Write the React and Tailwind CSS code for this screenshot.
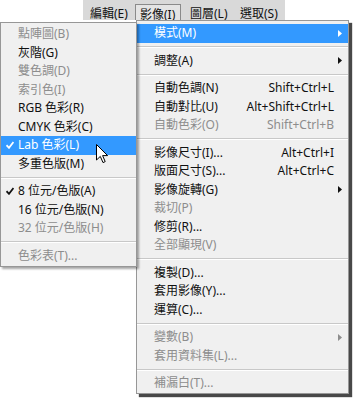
import React from 'react'

const leftItems = [
  { label: '點陣圖(B)', disabled: true },
  { label: '灰階(G)' },
  { label: '雙色調(D)', disabled: true },
  { label: '索引色(I)', disabled: true },
  { label: 'RGB 色彩(R)' },
  { label: 'CMYK 色彩(C)' },
  { label: 'Lab 色彩(L)', active: true, checked: true },
  { label: '多重色版(M)' },
  'sep',
  { label: '8 位元/色版(A)', checked: true },
  { label: '16 位元/色版(N)' },
  { label: '32 位元/色版(H)', disabled: true },
  'sep',
  { label: '色彩表(T)...', disabled: true },
]

const mainItems = [
  { label: '模式(M)', active: true, sub: true },
  'sep',
  { label: '調整(A)', sub: true },
  'sep',
  { label: '自動色調(N)', shortcut: 'Shift+Ctrl+L' },
  { label: '自動對比(U)', shortcut: 'Alt+Shift+Ctrl+L' },
  { label: '自動色彩(O)', shortcut: 'Shift+Ctrl+B', disabled: true },
  'sep',
  { label: '影像尺寸(I)...', shortcut: 'Alt+Ctrl+I' },
  { label: '版面尺寸(S)...', shortcut: 'Alt+Ctrl+C' },
  { label: '影像旋轉(G)', sub: true },
  { label: '裁切(P)', disabled: true },
  { label: '修剪(R)...' },
  { label: '全部顯現(V)', disabled: true },
  'sep',
  { label: '複製(D)...' },
  { label: '套用影像(Y)...' },
  { label: '運算(C)...' },
  'sep',
  { label: '變數(B)', sub: true, disabled: true },
  { label: '套用資料集(L)...', disabled: true },
  'sep',
  { label: '補漏白(T)...', disabled: true },
]

const Check = ({ color }) => (
  <svg width="8" height="8" viewBox="0 0 8 8">
    <path d="M0.5 4.2 L3 6.8 L7.5 1" fill="none" stroke={color} strokeWidth="1.8" />
  </svg>
)

const Arrow = ({ color }) => (
  <svg width="4" height="7" viewBox="0 0 4 7">
    <path d="M0 0 L4 3.5 L0 7 Z" fill={color} />
  </svg>
)

const Sep = () => (
  <div className="h-[9px] flex items-center">
    <div className="w-full border-t border-t-[#c8c8c8] border-b border-b-white" />
  </div>
)

function Item({ item }) {
  const { label, shortcut, disabled, active, sub, checked } = item
  const color = active ? 'text-white' : disabled ? 'text-[#8d8d8d]' : 'text-[#111]'
  const fill = active ? '#fff' : disabled ? '#8d8d8d' : '#111'
  return (
    <div className={`flex items-center h-[18.5px] ${active ? 'bg-[#3399ff]' : ''} ${color}`}>
      <div className="w-[17px] h-full flex items-center justify-center">
        {checked && <Check color={fill} />}
      </div>
      <span className="flex-1 whitespace-nowrap">{label}</span>
      {shortcut && <span className="whitespace-nowrap">{shortcut}</span>}
      <div className="w-[14px] h-full flex items-center pl-[4px]">
        {sub && <Arrow color={fill} />}
      </div>
    </div>
  )
}

export default function App() {
  return (
    <div className="relative w-[354px] h-[398px] bg-white overflow-hidden text-[12px] leading-[16px] font-['Noto_Sans','Noto_Sans_CJK_TC',sans-serif]">
      {/* menu bar */}
      <div className="ml-[83px] w-[202px] h-[20px] bg-[#d9d9d9] flex text-[#111]">
        <div className="w-[52px] pl-[7px] pt-[6px]">編輯(E)</div>
        <div className="w-[46px] mt-[4px] pl-[4px] pt-[2px] border border-b-0 border-[#8a8a8a] bg-[#e4e4e4]">影像(I)</div>
        <div className="w-[50px] pl-[9px] pt-[6px]">圖層(L)</div>
        <div className="w-[54px] pl-[9px] pt-[6px]">選取(S)</div>
      </div>

      <div className="flex items-start">
        {/* mode submenu */}
        <div className="relative z-10 mt-[2px] w-[137px] bg-[#f0f0f0] border border-[#979797] pt-[2px] pb-[1px] shadow-[2px_2px_2px_rgba(0,0,0,0.35)]">
          {leftItems.map((it, i) => (it === 'sep' ? <Sep key={i} /> : <Item key={i} item={it} />))}
        </div>

        {/* image menu */}
        <div className="-ml-[1px] w-[213px] bg-[#f0f0f0] border border-[#979797] pt-[3px] shadow-[3px_3px_1px_rgba(40,40,40,0.85)]">
          {mainItems.map((it, i) => (it === 'sep' ? <Sep key={i} /> : <Item key={i} item={it} />))}
        </div>
      </div>

      {/* mouse pointer */}
      <svg className="absolute left-[96px] top-[144px] z-20" width="13" height="20" viewBox="0 0 13 20">
        <path d="M0.5 0.5 L0.5 16 L4.3 12.4 L7 18.6 L9.2 17.6 L6.6 11.6 L11.6 11.6 Z" fill="#fff" stroke="#000" strokeWidth="1" strokeLinejoin="miter" />
      </svg>
    </div>
  )
}
